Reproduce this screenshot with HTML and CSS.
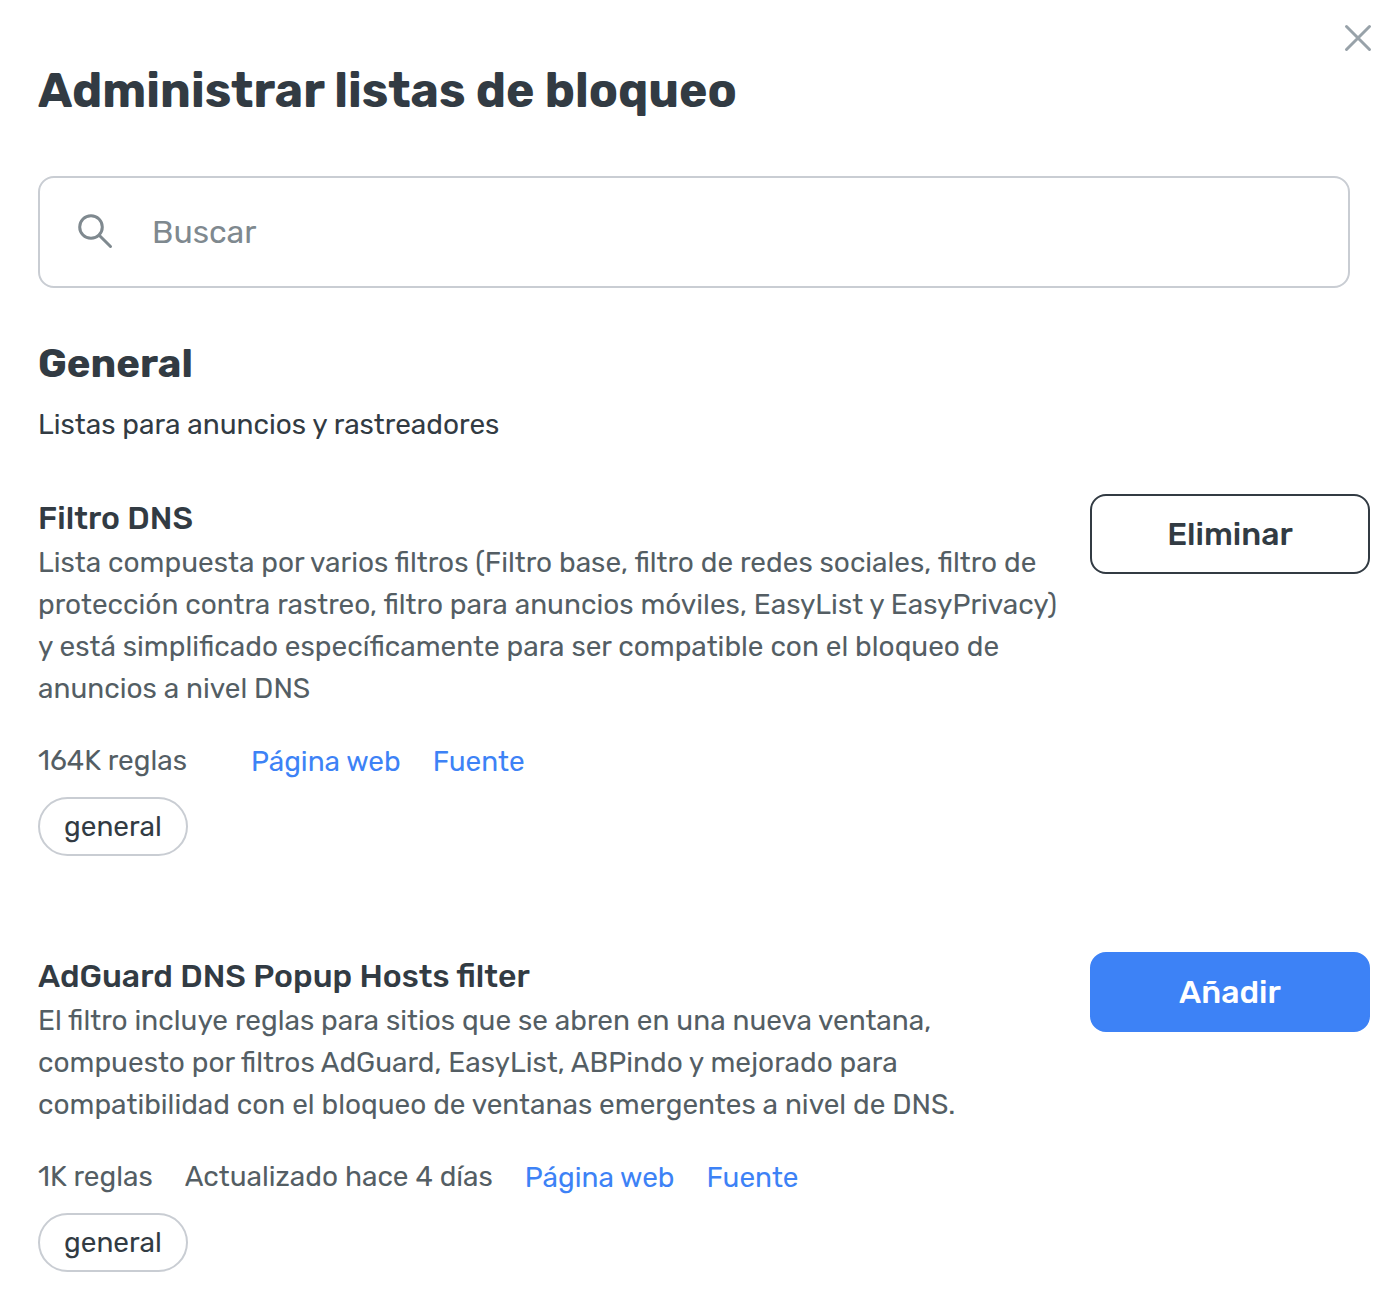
FILE: index.html
```html
<!DOCTYPE html>
<html lang="es">
<head>
    <meta charset="UTF-8">
    <meta name="viewport" content="width=device-width, initial-scale=1.0">
    <title>Administrar listas de bloqueo</title>
    <link rel="stylesheet" href="styles.css">
</head>
<body>
    <div class="modal">
        <button type="button" class="close" aria-label="Cerrar">
            <svg width="28" height="28" viewBox="0 0 28 28" fill="none" stroke="#98a2a9" stroke-width="3" stroke-linecap="round">
                <path d="M2.5 2.5l23 23M25.5 2.5l-23 23"/>
            </svg>
        </button>
        <h1>Administrar listas de bloqueo</h1>
        <label class="search">
            <svg width="36" height="36" viewBox="0 0 36 36" fill="none" stroke="#7f898f" stroke-width="3" stroke-linecap="round">
                <circle cx="13" cy="13" r="11.3"/>
                <path d="M21.2 21.2l11.3 11.3"/>
            </svg>
            <input type="text" placeholder="Buscar" aria-label="Buscar">
        </label>

        <h2>General</h2>
        <p class="subtitle">Listas para anuncios y rastreadores</p>

        <div class="filter">
            <div class="filter-info">
                <h3>Filtro DNS</h3>
                <p class="description">Lista compuesta por varios filtros (Filtro base, filtro de redes sociales, filtro de protección contra rastreo, filtro para anuncios móviles, EasyList y EasyPrivacy) y está simplificado específicamente para ser compatible con el bloqueo de anuncios a nivel DNS</p>
                <div class="meta">
                    <span class="rules">164K reglas</span>
                    <a href="#">Página web</a>
                    <a href="#">Fuente</a>
                </div>
                <div class="tag">general</div>
            </div>
            <button type="button" class="btn btn-outline">Eliminar</button>
        </div>

        <div class="filter">
            <div class="filter-info">
                <h3>AdGuard DNS Popup Hosts filter</h3>
                <p class="description">El filtro incluye reglas para sitios que se abren en una nueva ventana, compuesto por filtros AdGuard, EasyList, ABPindo y mejorado para compatibilidad con el bloqueo de ventanas emergentes a nivel de DNS.</p>
                <div class="meta">
                    <span>1K reglas</span>
                    <span>Actualizado hace 4 días</span>
                    <a href="#">Página web</a>
                    <a href="#">Fuente</a>
                </div>
                <div class="tag">general</div>
            </div>
            <button type="button" class="btn btn-primary">Añadir</button>
        </div>
    </div>
</body>
</html>
```
FILE: styles.css
```css
* {
    box-sizing: border-box;
}
body {
    margin: 0;
    background: #fff;
    color: #323b43;
    font-family: Rubik, Roboto, sans-serif;
    font-size: 28px;
}
h1, h2, h3, p {
    margin: 0;
}
.modal {
    position: relative;
    padding: 60px 18px 20px 38px;
}
.close {
    position: absolute;
    top: 24px;
    right: 16px;
    padding: 0;
    border: none;
    background: none;
    cursor: pointer;
}
.close svg {
    display: block;
}
h1 {
    margin-bottom: 54px;
    font-size: 48px;
    line-height: 62px;
}
.search {
    display: flex;
    align-items: center;
    gap: 38px;
    height: 112px;
    margin-right: 20px;
    margin-bottom: 48px;
    padding: 0 38px;
    border: 2px solid #c9cdd3;
    border-radius: 16px;
}
.search input {
    flex: 1;
    border: none;
    outline: none;
    padding: 0;
    font-family: inherit;
    font-size: 32px;
    color: #323b43;
}
.search input::placeholder {
    color: #7f898f;
}
h2 {
    margin-bottom: 12px;
    font-size: 40px;
    line-height: 56px;
}
.subtitle {
    line-height: 42px;
}
.filter {
    display: flex;
    align-items: flex-start;
    gap: 24px;
    margin-top: 48px;
    margin-bottom: 96px;
}
.filter + .filter {
    margin-top: 0;
    margin-bottom: 0;
}
.filter-info {
    flex: 1;
}
h3 {
    font-size: 32px;
    font-weight: 500;
    line-height: 48px;
}
.description {
    color: #545e64;
    line-height: 42px;
}
.meta {
    display: flex;
    gap: 32px;
    margin: 30px 0 13px;
    color: #545e64;
    line-height: 42px;
}
.meta .rules {
    margin-right: 32px;
}
.meta a {
    color: #3d82f6;
    line-height: 44px;
    text-decoration: none;
}
.tag {
    width: fit-content;
    padding: 0 24px;
    border: 2px solid #c9cdd3;
    border-radius: 30px;
    line-height: 55px;
}
.btn {
    width: 280px;
    height: 80px;
    border: 2px solid #323b43;
    border-radius: 16px;
    font-family: inherit;
    font-size: 32px;
    font-weight: 500;
    cursor: pointer;
}
.btn-outline {
    background: #fff;
    color: #323b43;
}
.btn-primary {
    border-color: #3d82f6;
    background: #3d82f6;
    color: #fff;
}
```
